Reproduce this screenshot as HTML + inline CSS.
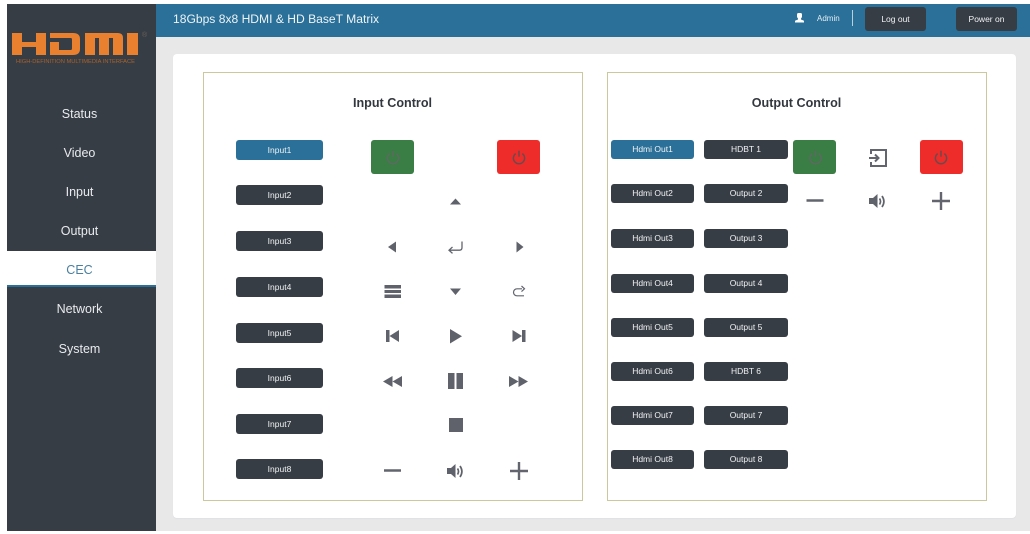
<!DOCTYPE html>
<html><head><meta charset="utf-8">
<style>
html,body{margin:0;padding:0;width:1030px;height:534px;overflow:hidden;background:#fff}
#w{position:absolute;left:0;top:0;width:1030px;height:534px;filter:blur(.35px);font-family:"Liberation Sans",sans-serif}
.a{position:absolute}
.side{left:7px;top:4px;width:149px;height:527px;background:#373d45}
.head{left:156px;top:4px;width:874px;height:33px;background:#2a7098}
.main{left:156px;top:37px;width:874px;height:494px;background:#e8e8e8}
.card{left:173px;top:54px;width:843px;height:464px;background:#fff;border-radius:4px;box-shadow:0 1px 1px #dfe1e6}
.panel{box-sizing:border-box;border:1px solid #c9c99c;background:#fff;top:72px;height:429px;width:380px}
.nav{left:7px;width:145px;text-align:center;font-size:12.500px;color:#e8ebee;line-height:20px}
.btn{background:#373d45;color:#f0f2f4;text-align:center;border-radius:3px;font-size:8.500px}
.b{left:236px;width:87px;height:20px;line-height:20px}
.o{height:19px;line-height:19px;width:83px}
.blue{background:#2a7098}
.x1{left:611px}.x2{left:704px;width:84px}
.title{font-size:12.600px;font-weight:bold;color:#33383f;text-align:center;line-height:16px}
.pw{width:43px;height:34px;border-radius:3px}
svg{position:absolute;overflow:visible}
</style></head><body><div id="w">
<div class="a side"></div>
<div class="a head"></div>
<div class="a main"></div>
<div class="a card"></div>
<div class="a panel" style="left:203px"></div>
<div class="a panel" style="left:607px"></div>

<svg style="left:0;top:0" width="156" height="70">
<g fill="#e8802f">
<path d="M12 33h10v9h14v-9h10v22h-10v-8h-14v8h-10z"/>
<path d="M50 33h23q7 0 7 6v10q0 6-7 6h-23v-13h9v8h12q1 0 1-2v-8q0-2-1-2h-21z"/>
<path d="M85 33h33q5 0 5 5v17h-10v-17h-4v17h-10v-17h-4v17h-10z"/>
<rect x="127" y="33" width="11" height="22"/>
</g>
<text x="142" y="37" font-size="7" fill="#6b6258" font-family="Liberation Sans">®</text>
<text x="16" y="63" font-size="5.300" fill="#a8622c" font-family="Liberation Sans" textLength="119" lengthAdjust="spacingAndGlyphs">HIGH-DEFINITION MULTIMEDIA INTERFACE</text>
</svg>

<div class="a nav" style="top:104px">Status</div>
<div class="a nav" style="top:143px">Video</div>
<div class="a nav" style="top:182px">Input</div>
<div class="a nav" style="top:221px">Output</div>
<div class="a" style="left:7px;top:251px;width:149px;height:34px;background:#fff;border-bottom:2px solid #2a7098"></div>
<div class="a nav" style="top:260px;color:#4a7f9f">CEC</div>
<div class="a nav" style="top:299px">Network</div>
<div class="a nav" style="top:339px">System</div>

<div class="a" style="left:173px;top:11px;font-size:12.100px;color:#eef3f6;line-height:16px">18Gbps 8x8 HDMI &amp; HD BaseT Matrix</div>
<svg style="left:795px;top:13px" width="10" height="10"><path d="M3.500 0h2q1.500 0 1.500 1.500v2q0 1-1 2v1l3 1.200v1.800h-9v-1.800l3-1.200v-1q-1-1-1-2v-2q0-1.500 1.500-1.500z" fill="#fff"/></svg>
<div class="a" style="left:817px;top:12px;font-size:8px;color:#e4edf3;line-height:13px">Admin</div>
<div class="a" style="left:852px;top:10px;width:1px;height:16px;background:#b9d0dd"></div>
<div class="a btn" style="left:865px;top:7px;width:61px;height:24px;line-height:24px">Log out</div>
<div class="a btn" style="left:956px;top:7px;width:61px;height:24px;line-height:24px">Power on</div>

<div class="a title" style="left:203px;top:95px;width:379px">Input Control</div>
<div class="a title" style="left:607px;top:95px;width:379px">Output Control</div>

<div class="a btn b blue" style="top:140px">Input1</div>
<div class="a btn b" style="top:185px">Input2</div>
<div class="a btn b" style="top:231px">Input3</div>
<div class="a btn b" style="top:277px">Input4</div>
<div class="a btn b" style="top:323px">Input5</div>
<div class="a btn b" style="top:368px">Input6</div>
<div class="a btn b" style="top:414px">Input7</div>
<div class="a btn b" style="top:459px">Input8</div>

<div class="a btn o x1 blue" style="top:140px">Hdmi Out1</div>
<div class="a btn o x1" style="top:184px">Hdmi Out2</div>
<div class="a btn o x1" style="top:229px">Hdmi Out3</div>
<div class="a btn o x1" style="top:274px">Hdmi Out4</div>
<div class="a btn o x1" style="top:318px">Hdmi Out5</div>
<div class="a btn o x1" style="top:362px">Hdmi Out6</div>
<div class="a btn o x1" style="top:406px">Hdmi Out7</div>
<div class="a btn o x1" style="top:450px">Hdmi Out8</div>
<div class="a btn o x2" style="top:140px">HDBT 1</div>
<div class="a btn o x2" style="top:184px">Output 2</div>
<div class="a btn o x2" style="top:229px">Output 3</div>
<div class="a btn o x2" style="top:274px">Output 4</div>
<div class="a btn o x2" style="top:318px">Output 5</div>
<div class="a btn o x2" style="top:362px">HDBT 6</div>
<div class="a btn o x2" style="top:406px">Output 7</div>
<div class="a btn o x2" style="top:450px">Output 8</div>

<div class="a pw" style="left:371px;top:140px;background:#3a7d45"></div>
<div class="a pw" style="left:497px;top:140px;background:#ee2d2a"></div>
<div class="a pw" style="left:793px;top:140px;background:#3a7d45"></div>
<div class="a pw" style="left:920px;top:140px;background:#ee2d2a"></div>

<svg style="left:0;top:0" width="1030" height="534">
<defs>
<g id="pow" fill="none" stroke-width="1.500"><path d="M-3.300-3.400a5.600 5.600 0 1 0 6.600 0"/><path d="M0-6.300v6"/></g>
<g id="vol"><path d="M-9-3h4l4.500-4v14l-4.500-4h-4z" fill="#5f626b"/><path d="M1.500-2.500q2 3 0 6M4-5q3.800 5.500 0 11" fill="none" stroke="#5f626b" stroke-width="1.700"/></g>
<g id="plus"><path d="M-9 0h18M0-9v18" stroke="#62656e" stroke-width="2.400"/></g>
<g id="minus"><path d="M-8.500 0h17" stroke="#62656e" stroke-width="2.400"/></g>
</defs>
<use href="#pow" x="393" y="157" stroke="#5d6a62"/>
<use href="#pow" x="519" y="157" stroke="#6a4a4e"/>
<use href="#pow" x="815.500" y="157" stroke="#5d6a62"/>
<use href="#pow" x="941" y="157" stroke="#6a4a4e"/>

<g fill="#5f626b">
<path d="M450 204.500l5.500-6 5.500 6z"/>
<path d="M396 241.500v11l-8-5.500z"/>
<path d="M516.500 241.500v11l7-5.500z"/>
<path d="M450 288.500l5.500 6.500 5.500-6.500z"/>
<rect x="384.500" y="285" width="16.500" height="3.500"/><rect x="384.500" y="290" width="16.500" height="3"/><rect x="384.500" y="294.500" width="16.500" height="3.500"/>
<path d="M386 330h3.500v12h-3.500zM399 330v12l-9.500-6z"/>
<path d="M450 329v14.500l12-7.200z"/>
<path d="M512.500 330v12l9.500-6zM522 330h3.500v12h-3.500z"/>
<path d="M392.500 376v11l-9.500-5.500zM402 376v11l-9.500-5.500z"/>
<path d="M448 373h6.500v16h-6.500zM456.500 373h6.500v16h-6.500z"/>
<path d="M509 376l9.500 5.500-9.500 5.500zM518.500 376l9.500 5.500-9.500 5.500z"/>
<rect x="449" y="418" width="14" height="14"/>
</g>
<path d="M462 241.500v6q0 2.700-2.500 2.700h-10M452.500 247l-3.500 3.200 3.500 3.200" fill="none" stroke="#62656e" stroke-width="1.300"/>
<path d="M522 288.800h-5a3.500 3.500 0 0 0 0 7h7M521.500 286l3 2.800-3 2.800" fill="none" stroke="#62656e" stroke-width="1.200"/>

<use href="#minus" x="392.500" y="470.500"/>
<use href="#vol" x="456" y="471"/>
<use href="#plus" x="519" y="471"/>
<use href="#minus" x="815" y="200.500"/>
<use href="#vol" x="878" y="201"/>
<use href="#plus" x="941" y="201"/>
<path d="M871 154v-4h15v16h-15v-4M869 158h9.500M875 154.500l3.500 3.500-3.500 3.500" fill="none" stroke="#62656e" stroke-width="2"/>
</svg>
</div></body></html>
